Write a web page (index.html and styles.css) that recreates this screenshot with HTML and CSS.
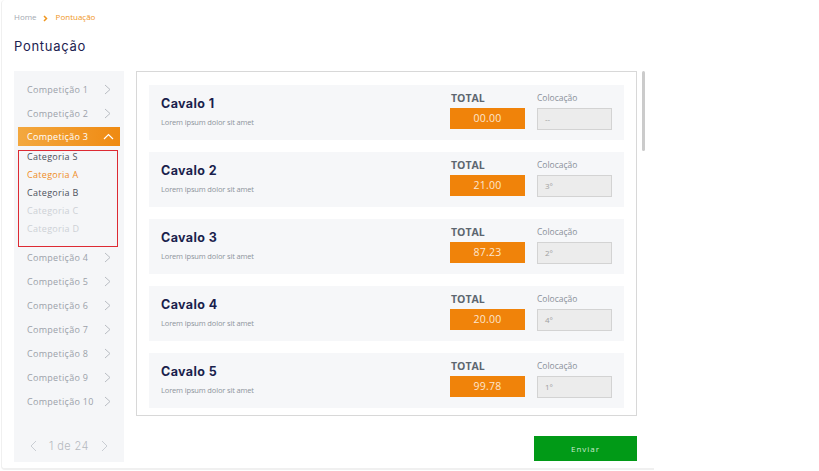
FILE: index.html
```html
<!DOCTYPE html>
<html lang="pt">
<head>
<meta charset="utf-8">
<title>Pontuação</title>
<link rel="stylesheet" href="styles.css">
</head>
<body>
<div class="frame">
  <div class="crumb">
    <span class="crumb-home">Home</span>
    <svg class="crumb-sep" width="5" height="7" viewBox="0 0 5 7"><polyline points="1,1 3.5,3.5 1,6" fill="none" stroke="#f0961e" stroke-width="1.5"/></svg>
    <span class="crumb-cur">Pontuação</span>
  </div>
  <h1 class="title">Pontuação</h1>
  <div class="content">
    <aside class="sidebar">
      <div class="comp"><span>Competição 1</span><svg class="chev" width="7" height="11" viewBox="0 0 7 11"><polyline points="1,1 6,5.5 1,10" fill="none" stroke="#b9bdc3" stroke-width="1"/></svg></div>
      <div class="comp"><span>Competição 2</span><svg class="chev" width="7" height="11" viewBox="0 0 7 11"><polyline points="1,1 6,5.5 1,10" fill="none" stroke="#b9bdc3" stroke-width="1"/></svg></div>
      <div class="comp active"><span>Competição 3</span><svg class="chev-up" width="11" height="7" viewBox="0 0 11 7"><polyline points="1,6 5.5,1.5 10,6" fill="none" stroke="#ffffff" stroke-width="1.2"/></svg></div>
      <div class="cats">
        <div class="cat">Categoria S</div>
        <div class="cat cur">Categoria A</div>
        <div class="cat">Categoria B</div>
        <div class="cat off">Categoria C</div>
        <div class="cat off">Categoria D</div>
      </div>
      <div class="comp"><span>Competição 4</span><svg class="chev" width="7" height="11" viewBox="0 0 7 11"><polyline points="1,1 6,5.5 1,10" fill="none" stroke="#b9bdc3" stroke-width="1"/></svg></div>
      <div class="comp"><span>Competição 5</span><svg class="chev" width="7" height="11" viewBox="0 0 7 11"><polyline points="1,1 6,5.5 1,10" fill="none" stroke="#b9bdc3" stroke-width="1"/></svg></div>
      <div class="comp"><span>Competição 6</span><svg class="chev" width="7" height="11" viewBox="0 0 7 11"><polyline points="1,1 6,5.5 1,10" fill="none" stroke="#b9bdc3" stroke-width="1"/></svg></div>
      <div class="comp"><span>Competição 7</span><svg class="chev" width="7" height="11" viewBox="0 0 7 11"><polyline points="1,1 6,5.5 1,10" fill="none" stroke="#b9bdc3" stroke-width="1"/></svg></div>
      <div class="comp"><span>Competição 8</span><svg class="chev" width="7" height="11" viewBox="0 0 7 11"><polyline points="1,1 6,5.5 1,10" fill="none" stroke="#b9bdc3" stroke-width="1"/></svg></div>
      <div class="comp"><span>Competição 9</span><svg class="chev" width="7" height="11" viewBox="0 0 7 11"><polyline points="1,1 6,5.5 1,10" fill="none" stroke="#b9bdc3" stroke-width="1"/></svg></div>
      <div class="comp"><span>Competição 10</span><svg class="chev" width="7" height="11" viewBox="0 0 7 11"><polyline points="1,1 6,5.5 1,10" fill="none" stroke="#b9bdc3" stroke-width="1"/></svg></div>
      <div class="pager">
        <svg width="7" height="12" viewBox="0 0 7 12"><polyline points="6,1 1,6 6,11" fill="none" stroke="#c9cdd3" stroke-width="1"/></svg>
        <span class="pager-text">1 de 24</span>
        <svg width="7" height="12" viewBox="0 0 7 12"><polyline points="1,1 6,6 1,11" fill="none" stroke="#c9cdd3" stroke-width="1"/></svg>
      </div>
    </aside>
    <main class="main">
      <div class="panel-row">
        <section class="panel">
          <div class="card">
            <div class="card-left"><div class="horse">Cavalo 1</div><div class="desc">Lorem ipsum dolor sit amet</div></div>
            <div class="card-right">
              <div class="field"><div class="lbl-total">TOTAL</div><div class="total">00.00</div></div>
              <div class="field"><div class="lbl-pos">Colocação</div><div class="pos">--</div></div>
            </div>
          </div>
          <div class="card">
            <div class="card-left"><div class="horse">Cavalo 2</div><div class="desc">Lorem ipsum dolor sit amet</div></div>
            <div class="card-right">
              <div class="field"><div class="lbl-total">TOTAL</div><div class="total">21.00</div></div>
              <div class="field"><div class="lbl-pos">Colocação</div><div class="pos">3°</div></div>
            </div>
          </div>
          <div class="card">
            <div class="card-left"><div class="horse">Cavalo 3</div><div class="desc">Lorem ipsum dolor sit amet</div></div>
            <div class="card-right">
              <div class="field"><div class="lbl-total">TOTAL</div><div class="total">87.23</div></div>
              <div class="field"><div class="lbl-pos">Colocação</div><div class="pos">2°</div></div>
            </div>
          </div>
          <div class="card">
            <div class="card-left"><div class="horse">Cavalo 4</div><div class="desc">Lorem ipsum dolor sit amet</div></div>
            <div class="card-right">
              <div class="field"><div class="lbl-total">TOTAL</div><div class="total">20.00</div></div>
              <div class="field"><div class="lbl-pos">Colocação</div><div class="pos">4°</div></div>
            </div>
          </div>
          <div class="card">
            <div class="card-left"><div class="horse">Cavalo 5</div><div class="desc">Lorem ipsum dolor sit amet</div></div>
            <div class="card-right">
              <div class="field"><div class="lbl-total">TOTAL</div><div class="total">99.78</div></div>
              <div class="field"><div class="lbl-pos">Colocação</div><div class="pos">1°</div></div>
            </div>
          </div>
        </section>
        <div class="scrollbar"></div>
      </div>
      <div class="actions"><button class="send">Enviar</button></div>
    </main>
  </div>
</div>
</body>
</html>
```

FILE: styles.css
```css
* { box-sizing: border-box; }
html, body { margin: 0; padding: 0; }
body {
  width: 819px;
  height: 471px;
  overflow: hidden;
  background: #ffffff;
  font-family: "Open Sans", "Noto Sans", sans-serif;
}
.frame {
  width: 653px;
  height: 470px;
  margin-left: 1px;
  border-left: 1px solid #f0f0f0;
  border-bottom: 2px solid #f0f0f0;
  border-radius: 4px 0 0 4px;
  padding-left: 12px;
}
.crumb {
  height: 22px;
  padding-top: 12px;
  display: flex;
  align-items: center;
  font-size: 8px;
  line-height: 10px;
}
.crumb > * { height: 10px; }
.crumb-home { color: #a3a9b1; }
.crumb-sep { margin: 2px 8px 0 6px; width: 5px; height: 7px; }
.crumb-cur { color: #f0961e; }
.title {
  margin: 16px 0 0;
  height: 16px;
  line-height: 16px;
  font-family: "Inter", "Lato", sans-serif;
  font-weight: 400;
  font-size: 13px;
  letter-spacing: 0.7px;
  color: #1c2150;
}
.content {
  margin-top: 17px;
  display: flex;
  gap: 12px;
}
.sidebar {
  width: 110px;
  height: 391px;
  background: #f5f6f8;
  padding-top: 6px;
  display: flex;
  flex-direction: column;
}
.comp {
  height: 24px;
  flex: none;
  display: flex;
  align-items: center;
  justify-content: space-between;
  padding: 0 13px;
  font-size: 9px;
  letter-spacing: 0.3px;
  color: #9ba1a9;
}
.comp.active {
  height: 19px;
  margin: 2px 4px 0;
  padding: 0 6px 0 9px;
  color: #ffffff;
  background: linear-gradient(90deg, #f3a83f 0%, #ef8a12 100%);
}
.cats {
  width: 100px;
  margin: 4px 0 -2px 4px;
  border: 1px solid #dd2a33;
  padding: 0 0 5px 8px;
  flex: none;
}
.cat {
  height: 18px;
  line-height: 12px;
  font-size: 9px;
  letter-spacing: 0.3px;
  color: #4b505b;
}
.cat.cur { color: #f08d1f; }
.cat.off { color: #cdd1d6; }
.pager {
  margin-top: auto;
  margin-bottom: 6px;
  height: 20px;
  display: flex;
  align-items: center;
  justify-content: center;
  gap: 12px;
}
.pager-text {
  font-family: "Inter", "Lato", sans-serif;
  font-weight: 300;
  font-size: 11px;
  letter-spacing: 0.4px;
  color: #b6bac0;
}
.main {
  display: flex;
  flex-direction: column;
}
.panel-row {
  display: flex;
  gap: 5px;
  align-items: flex-start;
}
.panel {
  width: 501px;
  height: 345px;
  border: 1px solid #d8d8d8;
  padding: 13px 12px;
  display: flex;
  flex-direction: column;
  gap: 12px;
}
.scrollbar {
  width: 3px;
  height: 80px;
  border-radius: 2px;
  background: #cbcbcb;
}
.card {
  height: 55px;
  flex: none;
  background: #f6f7f9;
  display: flex;
  justify-content: space-between;
  padding: 0 12px;
}
.card-left { padding-top: 12px; }
.horse {
  font-family: "Inter", "Lato", sans-serif;
  font-weight: 700;
  font-size: 12.5px;
  line-height: 14px;
  letter-spacing: 0.4px;
  color: #1a1f4d;
}
.desc {
  margin-top: 6px;
  font-size: 7.5px;
  line-height: 10px;
  letter-spacing: -0.15px;
  color: #8e949c;
}
.card-right {
  display: flex;
  gap: 12px;
  padding-top: 7px;
}
.lbl-total {
  height: 12px;
  line-height: 12px;
  padding-left: 1px;
  font-size: 10.5px;
  font-weight: 700;
  color: #5d6670;
}
.lbl-pos {
  height: 12px;
  line-height: 12px;
  font-size: 8.5px;
  color: #8a9099;
}
.total {
  margin-top: 4px;
  width: 75px;
  height: 21px;
  line-height: 21px;
  text-align: center;
  background: #f0830a;
  color: #fde6cf;
  font-size: 10.5px;
  letter-spacing: 0.2px;
}
.pos {
  margin-top: 4px;
  width: 75px;
  height: 22px;
  line-height: 20px;
  background: #ececec;
  border: 1px solid #d3d3d3;
  padding-left: 7px;
  color: #a0a0a0;
  font-size: 8px;
}
.actions {
  width: 501px;
  margin-top: 20px;
  display: flex;
  justify-content: flex-end;
}
.send {
  width: 103px;
  height: 25px;
  border: 0;
  padding: 0;
  background: #019a17;
  color: #cfead2;
  font-family: "Open Sans", sans-serif;
  font-size: 8px;
  letter-spacing: 1px;
}
```
